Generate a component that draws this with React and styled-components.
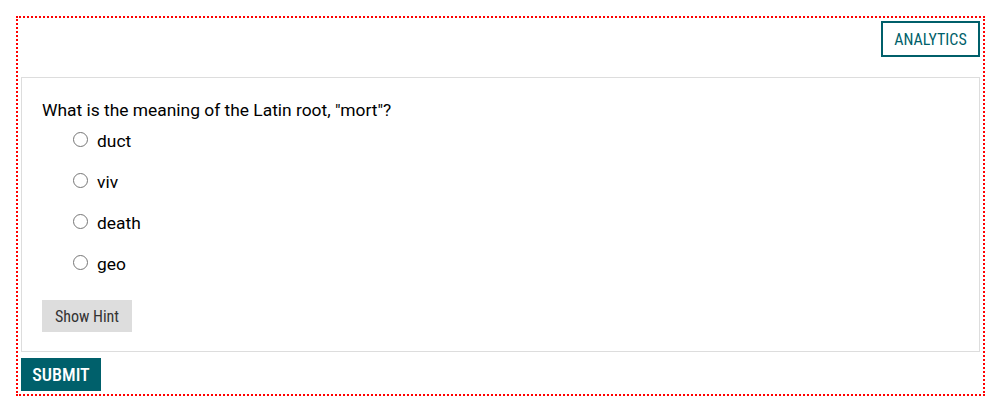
import { useState } from "react";
import styled, { createGlobalStyle } from "styled-components";

const GlobalStyle = createGlobalStyle`
  body{
    margin: 8px;
    background: #fff;
    font-family: Roboto, "Liberation Sans", sans-serif;
    color: #000;
  }
`;

const condensed = `"Roboto Condensed", "Liberation Sans Narrow", "DejaVu Sans Condensed", Roboto, sans-serif`;

const Frame = styled.div`
  margin: 8px;
  border: 2px dotted red;
  padding: 3px;
  display: flex;
  flex-direction: column;
`;

const TopBar = styled.div`
  display: flex;
  justify-content: flex-end;
  margin-bottom: 20px;
`;

const OutlineButton = styled.button`
  width: 99px;
  height: 36px;
  background: #fff;
  border: 2px solid #005f6a;
  color: #005f6a;
  font-family: ${condensed};
  font-size: 16px;
  padding: 0;
  cursor: pointer;
`;

const Card = styled.div`
  border: 1px solid #ddd;
  padding: 20px 20px 19px 20px;
`;

const Question = styled.div`
  font-size: 17.4px;
  line-height: 24px;
  margin-bottom: 7px;
`;

const Options = styled.div`
  display: flex;
  flex-direction: column;
  gap: 17px;
  padding-left: 26px;
`;

const Option = styled.label`
  display: flex;
  align-items: center;
  gap: 9px;
  font-size: 17.4px;
  line-height: 24px;
  cursor: pointer;
  input{
    margin: 0 0 4px 5px;
    width: 15px;
    height: 15px;
  }
`;

const HintButton = styled.button`
  margin-top: 24px;
  width: 90px;
  height: 32px;
  border: none;
  background: #ddd;
  color: #333;
  font-family: ${condensed};
  font-size: 16px;
  padding: 0;
  cursor: pointer;
`;

const SubmitButton = styled.button`
  align-self: flex-start;
  margin-top: 6px;
  width: 80px;
  height: 33px;
  border: none;
  background: #00606b;
  color: #fff;
  font-family: ${condensed};
  font-weight: 500;
  font-size: 18px;
  padding: 0;
  cursor: pointer;
`;

const choices = ["duct", "viv", "death", "geo"];

const App = () => {
  const [picked, setPicked] = useState(null);
  return <>
    <GlobalStyle />
    <Frame>
      <TopBar>
        <OutlineButton>ANALYTICS</OutlineButton>
      </TopBar>
      <Card>
        <Question>What is the meaning of the Latin root, "mort"?</Question>
        <Options>
          {choices.map(c => (
            <Option key={c}>
              <input type="radio" name="q" checked={picked === c} onChange={() => setPicked(c)} />
              {c}
            </Option>
          ))}
        </Options>
        <HintButton>Show Hint</HintButton>
      </Card>
      <SubmitButton>SUBMIT</SubmitButton>
    </Frame>
  </>
}

export default App;
